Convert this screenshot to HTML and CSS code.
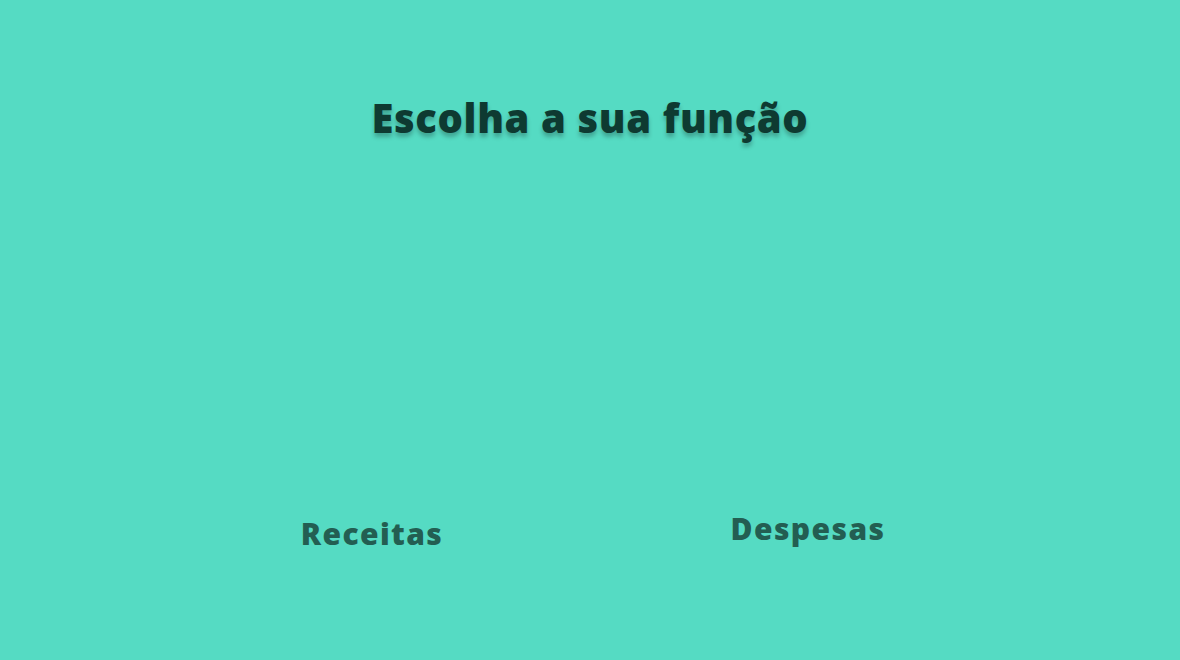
FILE: index.html
```html
<!DOCTYPE html>
<html lang="pt-BR">
<head>
<meta charset="utf-8">
<title>Escolha a sua função</title>
<link rel="stylesheet" href="styles.css">
</head>
<body>
<main class="page">
  <h1 class="title">Escolha a sua função</h1>
  <section class="options">
    <a class="option option-receitas" href="#">
      <div class="option-image"></div>
      <span class="option-label">Receitas</span>
    </a>
    <a class="option option-despesas" href="#">
      <div class="option-image"></div>
      <span class="option-label">Despesas</span>
    </a>
  </section>
</main>
</body>
</html>
```
FILE: styles.css
```css
html, body {
  margin: 0;
  padding: 0;
}
body {
  background: #55dbc3;
  font-family: "Open Sans", "DejaVu Sans", sans-serif;
  height: 660px;
  overflow: hidden;
}
.page {
  display: flex;
  flex-direction: column;
  align-items: center;
  padding-top: 92px;
}
.title {
  margin: 0;
  font-size: 40px;
  font-weight: 800;
  line-height: 52px;
  letter-spacing: 0.6px;
  color: #0e3a31;
  text-shadow: 0 4px 4px rgba(0, 0, 0, 0.25);
}
.options {
  display: grid;
  grid-template-columns: 436px 436px;
  margin-top: 0;
}
.option {
  display: flex;
  flex-direction: column;
  align-items: center;
  text-decoration: none;
}
.option-label {
  font-size: 30px;
  font-weight: 800;
  line-height: 40px;
  letter-spacing: 1.4px;
  color: #235e52;
}
.option-receitas .option-image {
  height: 370px;
}
.option-despesas .option-image {
  height: 365px;
}
```
